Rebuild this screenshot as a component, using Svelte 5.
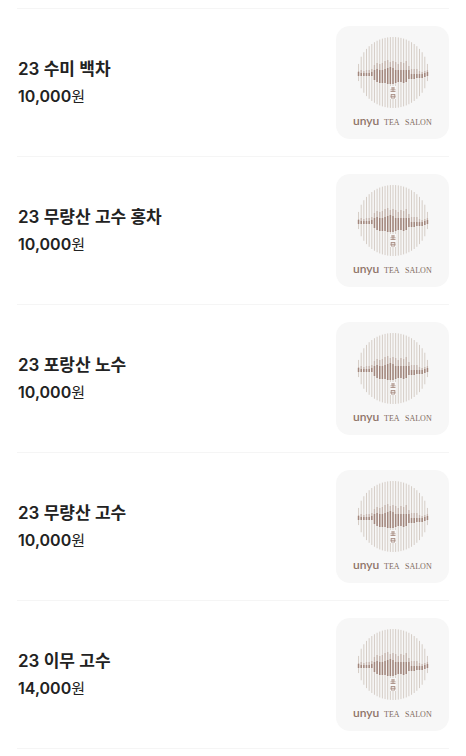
<script lang="ts">
	interface Tea {
		name: string;
		price: number;
	}

	const teas: Tea[] = [
		{ name: '23 수미 백차', price: 10000 },
		{ name: '23 무량산 고수 홍차', price: 10000 },
		{ name: '23 포랑산 노수', price: 10000 },
		{ name: '23 무량산 고수', price: 10000 },
		{ name: '23 이무 고수', price: 14000 }
	];

	// one entry per stripe: [far ridge top, near ridge top, near ridge bottom]
	const ridge = [
		[45, 46, 50], [44, 47, 50], [45, 47, 50], [44, 47, 50], [44, 47, 50],
		[43, 46, 50], [39, 44, 54], [37, 43, 56], [38, 44, 57], [37, 44, 57],
		[35, 43, 57], [34, 42, 58], [36, 41, 58], [35, 42, 58], [36, 44, 57],
		[38, 44, 56], [36, 44, 56], [37, 44, 57], [35, 44, 56], [40, 44, 53],
		[43, 48, 53], [43, 48, 53], [43, 48, 52], [45, 48, 52], [46, 48, 52],
		[45, 47, 51], [44, 46, 50]
	];

	const stripes = ridge.map(([far, top, bottom], i) => {
		const offset = (i - 13) * 2.65;
		const half = Math.sqrt(35.5 * 35.5 - offset * offset);
		return { x: 57 + offset, y1: 46.5 - half, y2: 46.5 + half, far, top, bottom };
	});
</script>

<ul class="menu">
	{#each teas as tea (tea.name)}
		<li class="item">
			<div class="info">
				<h2>{tea.name}</h2>
				<p><strong>{tea.price.toLocaleString('en-US')}</strong>원</p>
			</div>
			<svg class="thumb" viewBox="0 0 113 113" role="img" aria-label="unyu tea salon">
				{#each stripes as s}
					<path class="line" d="M{s.x} {s.y1}V{s.y2}" />
					<path class="far" d="M{s.x} {s.far}V{s.top}" />
					<path class="near" d="M{s.x} {s.top}V{s.bottom}" />
				{/each}
				<rect class="seal-bg" x="54" y="60" width="6" height="13" />
				<path class="seal" d="M55 62h4M54.5 63.8h5M54.5 65.5h5M57 61v5M55 68.5h4M54.5 70.3h5M55 72h4M55.2 68v4M58.8 68v4" />
				<text class="brand" x="17" y="99">unyu</text>
				<text class="sub" x="48" y="99">TEA</text>
				<text class="sub" x="69" y="99">SALON</text>
			</svg>
		</li>
	{/each}
</ul>

<style>
	:global(body) {
		background: #fff;
	}
	.menu {
		list-style: none;
		margin: 8px 17px 0;
		padding: 0;
		border-top: 1px solid #f5f5f5;
		font-family: Inter, 'Noto Sans CJK KR', sans-serif;
		color: #222;
	}
	.item {
		display: flex;
		align-items: center;
		justify-content: space-between;
		gap: 16px;
		padding: 17px 0;
		border-bottom: 1px solid #f5f5f5;
	}
	.info {
		padding-left: 1px;
	}
	h2 {
		margin: 0;
		font-size: 17px;
		font-weight: 600;
		line-height: 27px;
	}
	p {
		margin: 0;
		font-size: 15px;
		line-height: 27px;
	}
	strong {
		font-weight: 600;
		font-size: 16px;
	}
	.thumb {
		flex: none;
		width: 113px;
		height: 113px;
		border-radius: 14px;
		background: #f7f7f7;
	}
	.line {
		stroke: #d5cdc6;
		stroke-width: 1;
	}
	.far {
		stroke: #c4b3ab;
		stroke-width: 1.2;
	}
	.near {
		stroke: #a1857b;
		stroke-width: 1.5;
	}
	.seal-bg {
		fill: #f7f7f7;
	}
	.seal {
		fill: none;
		stroke: #a98f84;
		stroke-width: 0.9;
	}
	.brand {
		font: 600 12px Lato, sans-serif;
		fill: #8f7468;
	}
	.sub {
		font: 400 8px 'Liberation Serif', serif;
		fill: #7f6a5e;
	}
</style>
